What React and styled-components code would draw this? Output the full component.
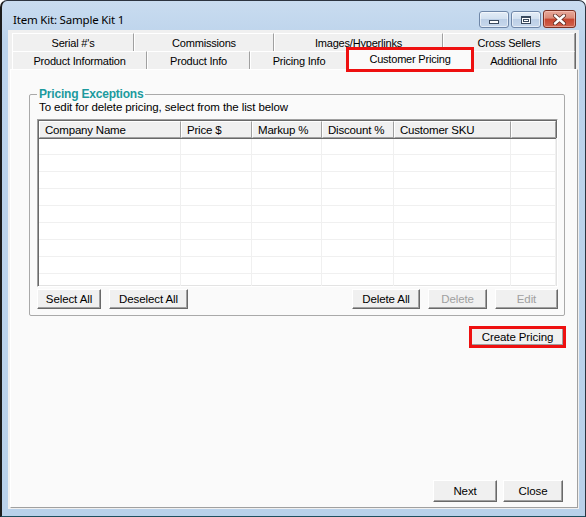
import React from 'react';
import styled, { createGlobalStyle } from 'styled-components';

const GlobalStyle = createGlobalStyle`
  html, body {
    margin: 0;
    padding: 0;
    background: #ffffff;
  }
  * {
    box-sizing: border-box;
  }
`;

const topTabs = [
    { label: "Serial #'s", w: 122 },
    { label: 'Commissions', w: 140 },
    { label: 'Images/Hyperlinks', w: 169 },
    { label: 'Cross Sellers', w: 132 },
];

const bottomTabs = [
    { label: 'Product Information', w: 135 },
    { label: 'Product Info', w: 103 },
    { label: 'Pricing Info', w: 98 },
    { label: 'Customer Pricing', w: 124, active: true },
    { label: 'Additional Info', w: 103 },
];

const columns = ['Company Name', 'Price $', 'Markup %', 'Discount %', 'Customer SKU', ''];

const App = () => {
    const rows = Array.from({ length: 9 });

    return (
        <>
            <GlobalStyle />
            <Window>
                <TitleBar>
                    <Title>Item Kit: Sample Kit 1</Title>
                    <CaptionButtons>
                        <CaptionButton>
                            <MinGlyph />
                        </CaptionButton>
                        <CaptionButton>
                            <MaxGlyph />
                        </CaptionButton>
                        <CloseButton>
                            <svg width="13" height="11" viewBox="0 0 13 11">
                                <path d="M2 1.5 L11 9.5 M11 1.5 L2 9.5" stroke="#5a2a22" strokeWidth="4" strokeLinecap="round" />
                                <path d="M2 1.5 L11 9.5 M11 1.5 L2 9.5" stroke="#ffffff" strokeWidth="2.4" strokeLinecap="round" />
                            </svg>
                        </CloseButton>
                    </CaptionButtons>
                </TitleBar>

                <ClientArea>
                    <TabRow>
                        {topTabs.map((t) => (
                            <Tab key={t.label} $w={t.w}>{t.label}</Tab>
                        ))}
                    </TabRow>
                    <TabRow>
                        {bottomTabs.map((t) => (
                            <Tab key={t.label} $w={t.w} $active={t.active}>{t.label}</Tab>
                        ))}
                    </TabRow>

                    <TabPage>
                        <GroupBox>
                            <Legend>Pricing Exceptions</Legend>
                            <Hint>To edit for delete pricing, select from the list below</Hint>
                            <ListView>
                                <ListGrid>
                                    {columns.map((c, i) => (
                                        <HeaderCell key={i}>{c}</HeaderCell>
                                    ))}
                                    {rows.map((_, r) =>
                                        columns.map((c, i) => <Cell key={r + '-' + i} />)
                                    )}
                                </ListGrid>
                            </ListView>
                            <ButtonRow>
                                <Button $w={64}>Select All</Button>
                                <Button $w={79}>Deselect All</Button>
                                <Spacer />
                                <Button $w={68}>Delete All</Button>
                                <Button $w={59} disabled>Delete</Button>
                                <Button $w={63} disabled>Edit</Button>
                            </ButtonRow>
                        </GroupBox>

                        <CreateRow>
                            <Button $w={93} $h={18} $marked>Create Pricing</Button>
                        </CreateRow>

                        <Spacer />

                        <FooterRow>
                            <Button $w={64} $h={22}>Next</Button>
                            <Button $w={60} $h={22}>Close</Button>
                        </FooterRow>
                    </TabPage>
                </ClientArea>
            </Window>
        </>
    );
};

export default App;


const Window = styled.div`
width: 586px;
height: 517px;
display: flex;
flex-direction: column;
border: 1px solid #2c3440;
border-left: 2px solid #1c1c1c;
border-bottom: 1px solid #1f4f5f;
border-radius: 7px 7px 0 0;
background: linear-gradient(180deg, #c9dcf0 0px, #bcd3eb 40px, #b9d1ea 100%);
font-family: 'Liberation Sans', Arial, sans-serif;
overflow: hidden;
`;

const TitleBar = styled.div`
height: 29px;
flex: 0 0 29px;
display: flex;
align-items: center;
justify-content: space-between;
padding: 8px 8px 0 11px;
`;

const Title = styled.div`
font-family: 'Noto Sans', 'Liberation Sans', sans-serif;
font-size: 11.5px;
color: #000;
letter-spacing: -0.2px;
`;

const CaptionButtons = styled.div`
display: flex;
gap: 2px;
align-items: flex-start;
margin-right: 1px;
`;

const CaptionButton = styled.div`
width: 30px;
height: 17px;
border: 1px solid #6f87a8;
border-radius: 3px;
background: linear-gradient(180deg, #e4edf7 0%, #d3e1f0 45%, #bccfe6 50%, #c7d8ec 100%);
box-shadow: inset 0 0 0 1px rgba(255, 255, 255, 0.55);
display: flex;
align-items: center;
justify-content: center;
`;

const MinGlyph = styled.span`
display: block;
width: 10px;
height: 4px;
margin-top: 5px;
background: #ffffff;
border: 1px solid #3a4a5e;
`;

const MaxGlyph = styled.span`
display: block;
width: 10px;
height: 8px;
background: #ffffff;
border: 1px solid #3a4a5e;
border-top-width: 2px;
box-shadow: inset 0 0 0 1px #ffffff, inset 0 0 0 2px #3a4a5e;
`;

const CloseButton = styled(CaptionButton)`
width: 33px;
height: 18px;
margin-top: -1px;
border-color: #7b3023;
background: linear-gradient(180deg, #e9a99b 0%, #d98a78 45%, #c7452f 50%, #d0644f 100%);
box-shadow: inset 0 0 0 1px rgba(255, 210, 200, 0.5);
`;

const ClientArea = styled.div`
flex: 1;
display: flex;
flex-direction: column;
margin: 0 6px 7px 6px;
padding: 3px 1px 1px 2px;
background: #f0f0f0;
`;

const TabRow = styled.div`
display: flex;
height: 18px;
margin: 0 2px;
align-items: flex-start;
`;

const Tab = styled.div`
position: relative;
width: ${(props) => props.$w}px;
height: ${(props) => (props.$active ? 21 : 18)}px;
margin-top: ${(props) => (props.$active ? -2 : 0)}px;
display: flex;
align-items: center;
justify-content: center;
padding-bottom: ${(props) => (props.$active ? 2 : 0)}px;
background: ${(props) => (props.$active ? '#fafafa' : '#f0f0f0')};
border-top: 1px solid #ffffff;
border-left: 1px solid #ffffff;
border-right: 1px solid #a0a0a0;
box-shadow: 1px 0 0 #696969;
font-size: 11px;
letter-spacing: -0.2px;
color: #000;
white-space: nowrap;
z-index: ${(props) => (props.$active ? 2 : 0)};
outline: ${(props) => (props.$active ? '3px solid #ee1010' : 'none')};
outline-offset: -1px;
`;

const TabPage = styled.div`
flex: 1;
display: flex;
flex-direction: column;
padding: 17px 12px 5px 18px;
background: #fafafa;
border: 1px solid;
border-color: #ffffff #a0a0a0 #a0a0a0 #ffffff;
`;

const GroupBox = styled.fieldset`
margin: 0;
padding: 0 6px 6px 7px;
border: 1px solid #a9a9a9;
border-radius: 2px;
display: flex;
flex-direction: column;
min-width: 0;
`;

const Legend = styled.legend`
padding: 0 2px;
font-size: 12px;
font-weight: bold;
line-height: 14px;
letter-spacing: -0.2px;
color: #1c9a9e;
`;

const Hint = styled.div`
font-size: 11.5px;
line-height: 13px;
letter-spacing: -0.1px;
color: #000;
padding-left: 2px;
`;

const ListView = styled.div`
margin-top: 5px;
height: 168px;
overflow: hidden;
background: #ffffff;
border: 1px solid;
border-color: #a0a0a0 #ffffff #ffffff #a0a0a0;
box-shadow: inset 1px 1px 0 #696969, inset -1px -1px 0 #e3e3e3;
padding: 1px;
`;

const ListGrid = styled.div`
display: grid;
grid-template-columns: 142px 71px 70px 72px 117px 1fr;
grid-auto-rows: 17px;
`;

const HeaderCell = styled.div`
height: 17px;
display: flex;
align-items: center;
padding-left: 5px;
font-size: 11.5px;
letter-spacing: -0.2px;
color: #000;
background: #f0f0f0;
border-top: 1px solid #ffffff;
border-left: 1px solid #ffffff;
border-right: 1px solid #a0a0a0;
border-bottom: 1px solid #a0a0a0;
box-shadow: 1px 0 0 #696969, 0 1px 0 #696969;
position: relative;
white-space: nowrap;
`;

const Cell = styled.div`
border-right: 1px solid #f0f0f0;
border-bottom: 1px solid #f0f0f0;
`;

const ButtonRow = styled.div`
display: flex;
align-items: center;
gap: 8px;
margin-top: 2px;
height: 20px;
`;

const Spacer = styled.div`
flex: 1;
`;

const Button = styled.button`
width: ${(props) => props.$w}px;
height: ${(props) => props.$h || 20}px;
padding: 0;
font-family: 'Liberation Sans', Arial, sans-serif;
font-size: 11.5px;
letter-spacing: -0.1px;
color: ${(props) => (props.disabled ? '#a0a0a0' : '#000')};
background: #f0f0f0;
border: 1px solid;
border-color: #ffffff #696969 #696969 #ffffff;
box-shadow: inset -1px -1px 0 #a0a0a0;
outline: ${(props) => (props.$marked ? '3px solid #ee1010' : 'none')};
outline-offset: -1px;
`;

const CreateRow = styled.div`
display: flex;
justify-content: flex-end;
margin-top: 12px;
margin-right: 1px;
`;

const FooterRow = styled.div`
display: flex;
justify-content: flex-end;
gap: 6px;
margin-right: 2px;
`;
